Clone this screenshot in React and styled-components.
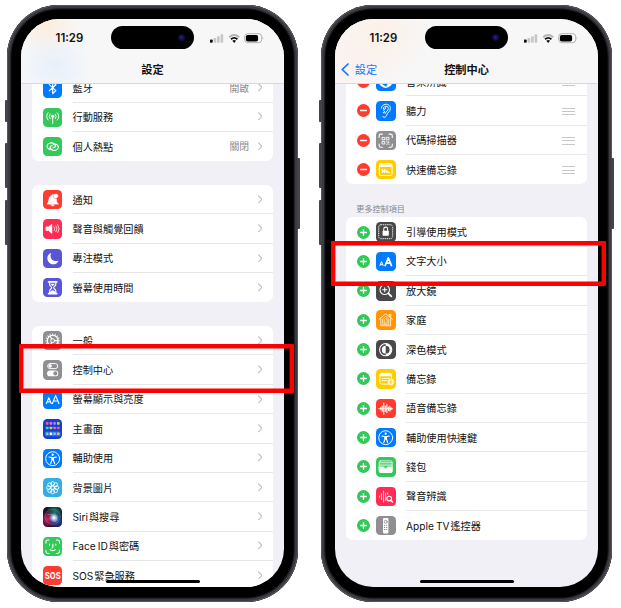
import React from 'react';
import styled, { createGlobalStyle, css } from 'styled-components';

const GlobalStyle = createGlobalStyle`
  * {
    box-sizing: border-box;
  }

  body {
    margin: 0;
    background: #fff;
    overflow: hidden;
    font-family: Inter, 'Noto Sans CJK TC', sans-serif;
    color: #111;
  }
`;

const Page = styled.main`
  display: flex;
  gap: 23.5px;
  width: 621px;
  height: 608px;
  padding: 5px 0 0 7.3px;
`;

const Phone = styled.section`
  position: relative;
  flex: none;
  width: 290.5px;
  height: 596.5px;
  padding: 14px;
  border-radius: 52px;
  background: #000;
  box-shadow: inset 0 0 0 1px #57575c, inset 0 0 0 3.2px #3a3a40, inset 0 0 0 4.4px #1b1b1f;
`;

const SideButton = styled.span`
  position: absolute;
  top: ${({ $top }) => $top}px;
  ${({ $right }) => ($right ? 'right: -2.2px;' : 'left: -2.3px;')}
  width: 2.5px;
  height: ${({ $size }) => $size}px;
  border-radius: 1px;
  background: #434348;
`;

const Screen = styled.div`
  position: relative;
  display: flex;
  flex-direction: column;
  height: 568.3px;
  border-radius: 38px;
  background: #f1f0f6;
  overflow: hidden;
`;

const tints = {
  left: css`
    background:
      radial-gradient(circle at 26px 4px, rgba(255, 232, 208, 0.7), transparent 32px),
      radial-gradient(circle at 34px 46px, rgba(222, 236, 252, 0.65), transparent 38px),
      #f7f7f8;
  `,
  right: css`
    background:
      radial-gradient(circle at 45px 12px, rgba(255, 236, 220, 0.6), transparent 52px),
      radial-gradient(circle at 10px 48px, rgba(255, 240, 237, 0.7), transparent 48px),
      #f7f7f8;
  `,
};

const Header = styled.header`
  position: relative;
  z-index: 1;
  flex: none;
  height: 65px;
  border-bottom: 1px solid #d9d9dc;
  ${({ $tint }) => tints[$tint]}
`;

const StatusBar = styled.div`
  display: flex;
  align-items: center;
  height: 37px;
  padding-left: 34.3px;
`;

const Time = styled.time`
  width: 55px;
  font-size: 11.4px;
  font-weight: 600;
  line-height: 14px;
  padding-top: 1px;
`;

const Island = styled.div`
  display: flex;
  align-items: center;
  justify-content: flex-end;
  width: 83.4px;
  height: 23.8px;
  padding-right: 8.5px;
  margin-right: 15.6px;
  border-radius: 12px;
  background: #000;
`;

const Lens = styled.span`
  width: 7px;
  height: 7px;
  border-radius: 50%;
  background: radial-gradient(circle, #25258a 0, #101046 45%, #07071c 100%);
`;

const NavBar = styled.div`
  display: grid;
  grid-template-columns: 1fr auto 1fr;
  align-items: center;
  height: 27px;
  padding: 0 5.5px;
`;

const Back = styled.a`
  display: flex;
  align-items: center;
  gap: 6px;
  font-size: 11.2px;
  line-height: 16px;
  color: #0a7aff;
`;

const Title = styled.h1`
  grid-column: 2;
  margin: 0;
  font-size: 11.2px;
  font-weight: 600;
  line-height: 16px;
`;

const Content = styled.div`
  display: flex;
  flex-direction: column;
  gap: 23.7px;
  padding: 0 10.6px 0 11px;
  margin-top: ${({ $offset }) => $offset}px;
`;

const Card = styled.ul`
  flex: none;
  margin: 0;
  padding: 0;
  list-style: none;
  border-radius: 6.5px;
  background: #fff;
`;

const Body = styled.div`
  display: flex;
  flex: 1;
  align-items: center;
  height: 100%;
  border-bottom: 1px solid #e7e7e9;
`;

const Row = styled.li`
  display: flex;
  align-items: center;
  height: 29.37px;
  padding-left: ${({ $editable }) => ($editable ? '11px' : '10.7px')};

  &:last-child ${Body} {
    border-bottom-color: transparent;
  }
`;

const Tile = styled.span`
  flex: none;
  display: flex;
  width: 19.4px;
  height: 19.4px;
  margin-right: 10.2px;
  border-radius: 4.3px;
  background: ${({ $color }) => $color};
  overflow: hidden;

  svg {
    width: 100%;
    height: 100%;
  }
`;

const Label = styled.span`
  flex: 1;
  padding-top: 2px;
  font-size: 10.17px;
  line-height: 15px;
  word-spacing: -0.8px;
  white-space: nowrap;
`;

const Value = styled.span`
  margin-right: 8.5px;
  padding-top: 1.4px;
  font-size: 9.8px;
  line-height: 15px;
  color: #8a8a8e;
`;

const Toggle = styled.span`
  flex: none;
  display: flex;
  width: 13px;
  height: 13px;
  margin-right: 6.2px;
  border-radius: 50%;
  background: ${({ $add }) => ($add ? '#34c759' : '#ff3b30')};
`;

const Handle = styled.span`
  display: flex;
  flex-direction: column;
  gap: 2.4px;
  width: 13px;
  padding-top: 2px;
  margin-right: 12px;

  i {
    height: 1px;
    background: #c8c8cb;
  }
`;

const SectionTitle = styled.h2`
  height: 10px;
  margin: -4px 0 -20.3px 10px;
  font-size: 8.1px;
  font-weight: 400;
  line-height: 10px;
  color: #858589;
`;

const HomeIndicator = styled.span`
  position: absolute;
  bottom: 4.2px;
  left: 50%;
  width: 93.4px;
  height: 2.8px;
  margin-left: -46.2px;
  border-radius: 2px;
  background: #000;
`;

const Highlight = styled.div`
  position: absolute;
  top: ${({ $top }) => $top}px;
  left: ${({ $left }) => $left}px;
  width: 275px;
  height: ${({ $size }) => $size}px;
  border-radius: 1px;
  box-shadow: inset 0 0 0 4.4px #f00;
`;

// Every glyph is drawn in a 20x20 box
const Glyph = ({ children, width = 1 }) => (
  <svg viewBox="0 0 20 20" fill="none" stroke="#fff" strokeWidth={width} strokeLinecap="round" strokeLinejoin="round">
    {children}
  </svg>
);

const ring = (count, draw) => Array.from({ length: count }, (_, i) => draw((360 / count) * i));

const Person = () => (
  <Glyph width={1}>
    <circle cx="10" cy="10" r="7.2" />
    <circle cx="10" cy="5.9" r="1.2" fill="#fff" stroke="none" />
    <path d="M6.2 8.3 9 8.9h2l2.8-.6M9.2 9v2.5L8 15M10.8 9v2.5L12 15" strokeWidth="1.2" />
    <path d="M9 8.8h2v3H9z" fill="#fff" stroke="none" />
  </Glyph>
);

const dotColors = [
  '#f0607a', '#e970d0', '#b877f0', '#d8d05a',
  '#43d99b', '#ffb93e', '#e8689a', '#f95a5a',
  '#78e27c', '#f3f7ff', '#5cd2ff', '#ffae5e',
];

const icons = {
  bluetooth: ['#007aff', (
    <Glyph width={1.2}>
      <path d="m6.5 6.8 6.8 6.2-3.3 3V4l3.3 3-6.8 6.2" />
    </Glyph>
  )],
  cellular: ['#34c759', (
    <Glyph width={1}>
      <circle cx="10" cy="8.6" r="1.2" fill="#fff" />
      <path d="M10 9v7M7.3 6.3q-1.8 2.4 0 4.8M12.7 6.3q1.8 2.4 0 4.8M5.2 5q-2.9 3.7 0 7.4M14.8 5q2.9 3.7 0 7.4" />
    </Glyph>
  )],
  hotspot: ['#34c759', (
    <Glyph width={1.2}>
      <path d="M9.5 12.4C6 13.5 3.6 11.2 4.3 8.7 5 6 9.5 5.3 11.7 7.2c2 1.7.9 3.9-1.1 3.9" />
      <path d="M10.5 7.6c3.5-1.1 5.9 1.2 5.2 3.7-.7 2.7-5.2 3.4-7.4 1.5-2-1.7-.9-3.9 1.1-3.9" />
    </Glyph>
  )],
  bell: ['#ff3b30', (
    <Glyph width={0.6}>
      <path d="M4.3 14.4c1.8-1.6 1.4-4 2-6 .6-1.7 1.8-2.7 3-2.9.3-1 .9-1.2 1.4-.9-.9 2.5.9 4.6 3.2 4.6 0 2 .1 3.7 1.8 5.2z" fill="#fff" />
      <path d="M8.3 15.3h3.4c-.6 1.6-2.8 1.6-3.4 0z" fill="#fff" />
      <circle cx="13.2" cy="6.2" r="2.1" fill="#fff" />
    </Glyph>
  )],
  sound: ['#ff2d55', (
    <Glyph width={1}>
      <path d="M3.5 8.3h2.2L9 5.4v9.2l-3.3-2.9H3.5z" fill="#fff" />
      <path d="M11.6 8.2q1.2 1.8 0 3.6M13.4 7q2 3 0 6M15.2 5.8q2.8 4.2 0 8.4" strokeWidth="0.8" />
    </Glyph>
  )],
  moon: ['#5856d6', (
    <Glyph width={0}>
      <path d="M8.4 4.2c-5 1.4-5.3 8.6-.6 11 3.4 1.6 7 .1 8.2-3.2-6 2-9.6-2.6-7.6-7.8z" fill="#fff" />
    </Glyph>
  )],
  hourglass: ['#5856d6', (
    <Glyph width={1.2}>
      <path d="M5.8 4h8.4M5.8 16h8.4" strokeWidth="1.8" />
      <path d="M6.8 5v1.6c0 1.7 2.2 2.2 2.2 3.4s-2.2 1.7-2.2 3.4V15h6.4v-1.6c0-1.7-2.2-2.2-2.2-3.4s2.2-1.7 2.2-3.4V5" />
      <path d="M7.6 6h4.8L10 8.4zM7 14.6q3-3.7 6 0z" fill="#fff" stroke="none" />
    </Glyph>
  )],
  gear: ['#8e8e93', (
    <Glyph width={1.3}>
      <circle cx="10" cy="10" r="5.5" />
      <circle cx="10" cy="10" r="2" strokeWidth="1" />
      {ring(16, (a) => <path key={a} d="M10 3.9V3" strokeWidth="1.1" transform={`rotate(${a} 10 10)`} />)}
      {ring(3, (a) => <path key={a} d="M12 10h3.4" transform={`rotate(${a} 10 10)`} />)}
    </Glyph>
  )],
  switches: ['#8e8e93', (
    <Glyph width={1}>
      <rect x="4.8" y="3.7" width="10.4" height="5.2" rx="2.6" />
      <circle cx="7.4" cy="6.3" r="1.8" fill="#fff" stroke="none" />
      <rect x="4.2" y="10.8" width="11.6" height="6" rx="3" fill="#fff" stroke="none" />
      <circle cx="12.7" cy="13.8" r="2.1" fill="#8e8e93" stroke="none" />
    </Glyph>
  )],
  display: ['#007aff', (
    <Glyph width={1.15}>
      <path d="m3.5 14 2.5-6 2.5 6M4.3 12.2h3.4M9.7 14 13 5.8l3.4 8.2M10.8 11.4h4.5" />
    </Glyph>
  )],
  textSize: ['#007aff', (
    <Glyph width={1.7}>
      <path d="m4 14 1.7-4 1.7 4M4.7 13h2" strokeWidth="1" />
      <path d="m9.4 14 3.3-8 3.3 8M10.6 11.4h4.2" />
    </Glyph>
  )],
  home: ['#1240d0', (
    <Glyph width={0}>
      <rect x="1.8" y="13" width="16.4" height="4.8" rx="1.4" fill="#86b6ff" opacity="0.35" />
      {dotColors.map((color, i) => (
        <rect key={color} x={3 + (i % 4) * 3.8} y={3.2 + Math.floor(i / 4) * 4.7 + (i > 7 ? 1.2 : 0)} width="2.7" height="2.7" rx="0.7" fill={color} />
      ))}
    </Glyph>
  )],
  accessibility: ['#007aff', <Person />],
  wallpaper: ['#32ade6', (
    <Glyph width={0.9}>
      <circle cx="10" cy="10" r="1.9" />
      {ring(8, (a) => <ellipse key={a} cx="10" cy="5.9" rx="1.9" ry="2.3" transform={`rotate(${a} 10 10)`} />)}
    </Glyph>
  )],
  siri: ['radial-gradient(ellipse at 58% 54%, #f4f8ff 0 4%, #8fb4e0 16%, transparent 32%), radial-gradient(circle at 24% 62%, #d3206c, transparent 46%), radial-gradient(circle at 62% 24%, #17816e, transparent 46%), radial-gradient(circle at 72% 68%, #2a58c8, transparent 42%), #181023', (
    <Glyph width={0.6}>
      <circle cx="10" cy="10" r="7.8" opacity="0.28" />
      <path d="M4.5 7.8q6-1 8.5 2.5t-1.5 5" stroke="#ffd6ec" opacity="0.55" />
    </Glyph>
  )],
  faceId: ['#34c759', (
    <Glyph width={1.1}>
      <path d="M3 6.3V5q0-2 2-2h1.3M13.7 3H15q2 0 2 2v1.3M17 13.7V15q0 2-2 2h-1.3M6.3 17H5q-2 0-2-2v-1.3M6.8 7.3v1.2M13.2 7.3v1.2M10.2 7.2v3.2q0 .8-.9.8M7.3 13q2.7 2.2 5.4 0" />
    </Glyph>
  )],
  sos: ['#ff3b30', (
    <svg viewBox="0 0 20 20">
      <text x="10" y="13.4" fill="#fff" fontSize="9.4" fontWeight="700" textAnchor="middle" textLength="16.4" lengthAdjust="spacingAndGlyphs">SOS</text>
    </svg>
  )],
  shazam: ['#007aff', (
    <Glyph width={1.8}>
      <circle cx="10" cy="9.2" r="7.2" fill="#fff" stroke="none" />
      <path d="M9.6 6.2 7.3 8.3q-1.8 2 .2 3.8l2.7 2M10.4 12.8l2.3-2q1.8-2-.2-3.8" stroke="#007aff" />
    </Glyph>
  )],
  ear: ['#007aff', (
    <Glyph width={1}>
      <path d="M5.6 7.4C6 1.8 14.8 1.9 14.8 7.7c0 3.5-3.2 4.1-3.7 6.6-.4 2.5-3 3.3-4.3 1.6" />
      <path d="M7.6 8.2c0-3.8 5.1-3.8 5.1-.5 0 2.4-2.5 2.8-3.2 5M7.7 9.6q2.6-.8 2.2-2.8M7.4 12.2q1.7.7 1.5-1.4" />
    </Glyph>
  )],
  qr: ['#8e8e93', (
    <Glyph width={1.1}>
      <path d="M3.2 6.6V5q0-1.8 1.8-1.8h1.6M13.4 3.2H15q1.8 0 1.8 1.8v1.6M16.8 13.4V15q0 1.8-1.8 1.8h-1.6M6.6 16.8H5q-1.8 0-1.8-1.8v-1.6" />
      <path d="M6.6 6.6h2.5v2.5H6.6zM10.9 6.6h2.5v2.5h-2.5zM6.6 10.9h2.5v2.5H6.6z" strokeWidth="0.9" />
      <path d="M11 11h.4M13.2 11v1M12 12.4h.1M11 13.6h.2M13.3 13.6h.1" />
    </Glyph>
  )],
  quickNote: ['#ffcc00', (
    <Glyph width={1.1}>
      <rect x="3.5" y="4" width="13" height="12" rx="1.8" />
      <path d="M4 5h12v2.2H4z" fill="#fff" stroke="none" />
      <path d="M6.5 13V9.7l2.3 3.2V9.7l2.4 3.2v-2l1.6 2h1" />
    </Glyph>
  )],
  lock: ['#48484a', (
    <Glyph width={1}>
      <rect x="2.8" y="2.8" width="14.4" height="14.4" rx="2.4" strokeWidth="0.9" strokeDasharray="0.7 1.5" />
      <rect x="6.8" y="9" width="6.4" height="5.3" rx="0.8" fill="#fff" stroke="none" />
      <path d="M8 9V7.3q0-2 2-2t2 2V9" strokeWidth="1.1" />
    </Glyph>
  )],
  magnifier: ['#48484a', (
    <Glyph width={1.1}>
      <circle cx="9" cy="9" r="4.9" />
      <path d="M6.9 9h4.2M9 6.9v4.2" />
      <path d="m12.8 12.8 3 3" strokeWidth="1.9" />
    </Glyph>
  )],
  house: ['#ff9500', (
    <Glyph width={0.8}>
      <path d="M3 9.8 10 3.8l7 6M13.8 6.6V4.5h1.5v3.3M4.9 9v7.3h10.2V9" />
      <path d="M6.8 14.6V9.3L10 6.5l3.2 2.8v5.3zM8.5 13.2V10L10 8.8 11.5 10v3.2z" strokeWidth="0.7" />
    </Glyph>
  )],
  darkMode: ['#48484a', (
    <Glyph width={1.1}>
      <circle cx="10" cy="10" r="6.3" />
      <path d="M10 6a4 4 0 0 0 0 8z" fill="#fff" stroke="none" />
      <path d="M10 3.8a6.2 6.2 0 0 1 0 12.4V14a4 4 0 0 0 0-8z" fill="#fff" stroke="none" />
    </Glyph>
  )],
  notes: ['#ffcc00', (
    <Glyph width={1}>
      <rect x="4" y="4.4" width="12" height="11.2" rx="1.8" />
      <path d="M4.2 5h11.6v2.4H4.2z" fill="#fff" stroke="none" />
      <path d="M6.3 9.7h7.2M6.3 12h4.6" strokeWidth="0.9" />
      <circle cx="15.4" cy="13.4" r="3.5" fill="#fff" stroke="#ffcc00" strokeWidth="0.6" />
      <path d="M13.7 13.4h3.4M15.4 11.7v3.4" stroke="#ffcc00" />
    </Glyph>
  )],
  voiceMemo: ['#ff3b30', (
    <Glyph width={0.8}>
      <path d="M4.9 8.9v2.2M6.4 7.2v5.6M8 4.2v11.6M9.6 7.2v5.6M11.2 5.8v8.4M12.8 8.2v3.6M14.3 7.6v4.8M15.6 9v2" strokeWidth="1.1" />
      <path d="M2.8 10h14.4" />
    </Glyph>
  )],
  wallet: ['#34c759', (
    <Glyph width={0.7}>
      <rect x="3.3" y="4" width="13.4" height="12" rx="1.5" strokeWidth="0.8" />
      <path d="M3.7 5.8h12.6M3.7 7.4h12.6M3.7 9h12.6" />
      <path d="M3.3 10.2H8q.3 1.6 2 1.6t2-1.6h4.7v4.5q0 1.3-1.3 1.3H4.6q-1.3 0-1.3-1.3z" fill="#fff" />
    </Glyph>
  )],
  soundSearch: ['#ff2d55', (
    <Glyph width={0.8}>
      <path d="M3.6 9.2v1.6M5.7 7v6M7.8 4.3v11.4M9.9 6.5v7.4" />
      <circle cx="13.6" cy="11.9" r="2.4" strokeWidth="1.1" />
      <path d="m15.5 13.8 1.5 1.6" strokeWidth="1.5" />
      <path d="M12 5.6v2.2" />
    </Glyph>
  )],
  remote: ['#8e8e93', (
    <Glyph width={0}>
      <rect x="7.2" y="2" width="5.6" height="16" rx="1.2" fill="#fff" />
      <circle cx="10" cy="6" r="1.6" fill="none" stroke="#8e8e93" strokeWidth="0.9" />
      <path d="M8.8 9.5h.2M11 9.5h.2M8.8 11.7h.2M11 11.7h.2M8.8 13.9h.2M11 13.9h.2" stroke="#77777c" strokeWidth="1.1" />
    </Glyph>
  )],
};

const Icon = ({ name }) => {
  const [color, drawing] = icons[name];
  return <Tile $color={color}>{drawing}</Tile>;
};

const ChevronIcon = styled.svg`
  width: 4.6px;
  height: 8.6px;
  margin-right: 11px;
`;

const Chevron = () => (
  <ChevronIcon viewBox="0 0 4.6 8.6" fill="none" stroke="#bdbdc1" strokeWidth="1.1" strokeLinecap="round">
    <path d="M.6.8 4 4.3.6 7.8" />
  </ChevronIcon>
);

const StatusIcons = () => (
  <svg width="54" height="12" viewBox="0 0 54 12">
    <rect x="0" y="7.6" width="2.7" height="3.2" rx="0.7" fill="#111" />
    <rect x="3.6" y="5.9" width="2.6" height="4.9" rx="0.7" fill="#c6c6c8" />
    <rect x="7.1" y="4.2" width="2.6" height="6.6" rx="0.7" fill="#c6c6c8" />
    <rect x="10.6" y="2.2" width="2.6" height="8.6" rx="0.7" fill="#c6c6c8" />
    <g fill="none" strokeWidth="1.8">
      <path d="M19.2 5.2Q24.2.8 29.2 5.2" stroke="#b4b4b6" />
      <path d="M21 7.2Q24.2 4.5 27.4 7.2" stroke="#111" />
    </g>
    <path d="M22.3 8.8q1.9-1.4 3.8 0l-1.9 2.1z" fill="#111" />
    <rect x="34.7" y="1.7" width="17" height="9" rx="3" fill="none" stroke="#aaaaac" strokeWidth="0.9" />
    <rect x="35.9" y="2.9" width="12.2" height="6.6" rx="1.8" fill="#000" />
    <path d="M52.6 4.7q1.4 1.5 0 3z" fill="#aaaaac" />
  </svg>
);

const PhoneFrame = ({ title, back, tint, offset, children }) => (
  <Phone>
    <SideButton $top={95} $size={21.7} />
    <SideButton $top={138} $size={44.7} />
    <SideButton $top={195} $size={45} />
    <SideButton $top={152.6} $size={71} $right />
    <Screen>
      <Header $tint={tint}>
        <StatusBar>
          <Time>11:29</Time>
          <Island>
            <Lens />
          </Island>
          <StatusIcons />
        </StatusBar>
        <NavBar>
          {back && (
            <Back>
              <svg width="8" height="13" viewBox="0 0 8 13" fill="none" stroke="#0a7aff" strokeWidth="1.7" strokeLinecap="round">
                <path d="M7 1 1.3 6.5 7 12" />
              </svg>
              {back}
            </Back>
          )}
          <Title>{title}</Title>
        </NavBar>
      </Header>
      <Content $offset={offset}>{children}</Content>
      <HomeIndicator />
    </Screen>
  </Phone>
);

// A hair space separates Latin words from the Chinese that follows
const settings = [
  [
    { icon: 'bluetooth', label: '藍牙', value: '開啟' },
    { icon: 'cellular', label: '行動服務' },
    { icon: 'hotspot', label: '個人熱點', value: '關閉' },
  ],
  [
    { icon: 'bell', label: '通知' },
    { icon: 'sound', label: '聲音與觸覺回饋' },
    { icon: 'moon', label: '專注模式' },
    { icon: 'hourglass', label: '螢幕使用時間' },
  ],
  [
    { icon: 'gear', label: '一般' },
    { icon: 'switches', label: '控制中心' },
    { icon: 'display', label: '螢幕顯示與亮度' },
    { icon: 'home', label: '主畫面' },
    { icon: 'accessibility', label: '輔助使用' },
    { icon: 'wallpaper', label: '背景圖片' },
    { icon: 'siri', label: 'Siri\u200a與搜尋' },
    { icon: 'faceId', label: 'Face ID\u200a與密碼' },
    { icon: 'sos', label: 'SOS\u200a緊急服務' },
  ],
];

const included = [
  { icon: 'shazam', label: '音樂辨識' },
  { icon: 'ear', label: '聽力' },
  { icon: 'qr', label: '代碼掃描器' },
  { icon: 'quickNote', label: '快速備忘錄' },
];

const more = [
  { icon: 'lock', label: '引導使用模式' },
  { icon: 'textSize', label: '文字大小' },
  { icon: 'magnifier', label: '放大鏡' },
  { icon: 'house', label: '家庭' },
  { icon: 'darkMode', label: '深色模式' },
  { icon: 'notes', label: '備忘錄' },
  { icon: 'voiceMemo', label: '語音備忘錄' },
  { icon: 'accessibility', label: '輔助使用快速鍵' },
  { icon: 'wallet', label: '錢包' },
  { icon: 'soundSearch', label: '聲音辨識' },
  { icon: 'remote', label: 'Apple TV\u200a遙控器' },
];

const ControlCard = ({ items, add }) => (
  <Card>
    {items.map((item) => (
      <Row key={item.label} $editable>
        <Toggle $add={add}>
          <Glyph width={2}>
            <path d={add ? 'M10 5.5v9M5.5 10h9' : 'M5.5 10h9'} />
          </Glyph>
        </Toggle>
        <Icon name={item.icon} />
        <Body>
          <Label>{item.label}</Label>
          {!add && (
            <Handle>
              <i />
              <i />
              <i />
            </Handle>
          )}
        </Body>
      </Row>
    ))}
  </Card>
);

const App = () => (
  <>
    <GlobalStyle />
    <Page>
      <PhoneFrame title="設定" tint="left" offset={-10.8}>
        {settings.map((group) => (
          <Card key={group[0].label}>
            {group.map((item) => (
              <Row key={item.label}>
                <Icon name={item.icon} />
                <Body>
                  <Label>{item.label}</Label>
                  {item.value && <Value>{item.value}</Value>}
                  <Chevron />
                </Body>
              </Row>
            ))}
          </Card>
        ))}
      </PhoneFrame>
      <PhoneFrame title="控制中心" back="設定" tint="right" offset={-17.1}>
        <ControlCard items={included} />
        <SectionTitle>更多控制項目</SectionTitle>
        <ControlCard items={more} add />
      </PhoneFrame>
    </Page>
    <Highlight $top={344.2} $left={19.4} $size={49} />
    <Highlight $top={241} $left={331.1} $size={45.4} />
  </>
);

export default App;
